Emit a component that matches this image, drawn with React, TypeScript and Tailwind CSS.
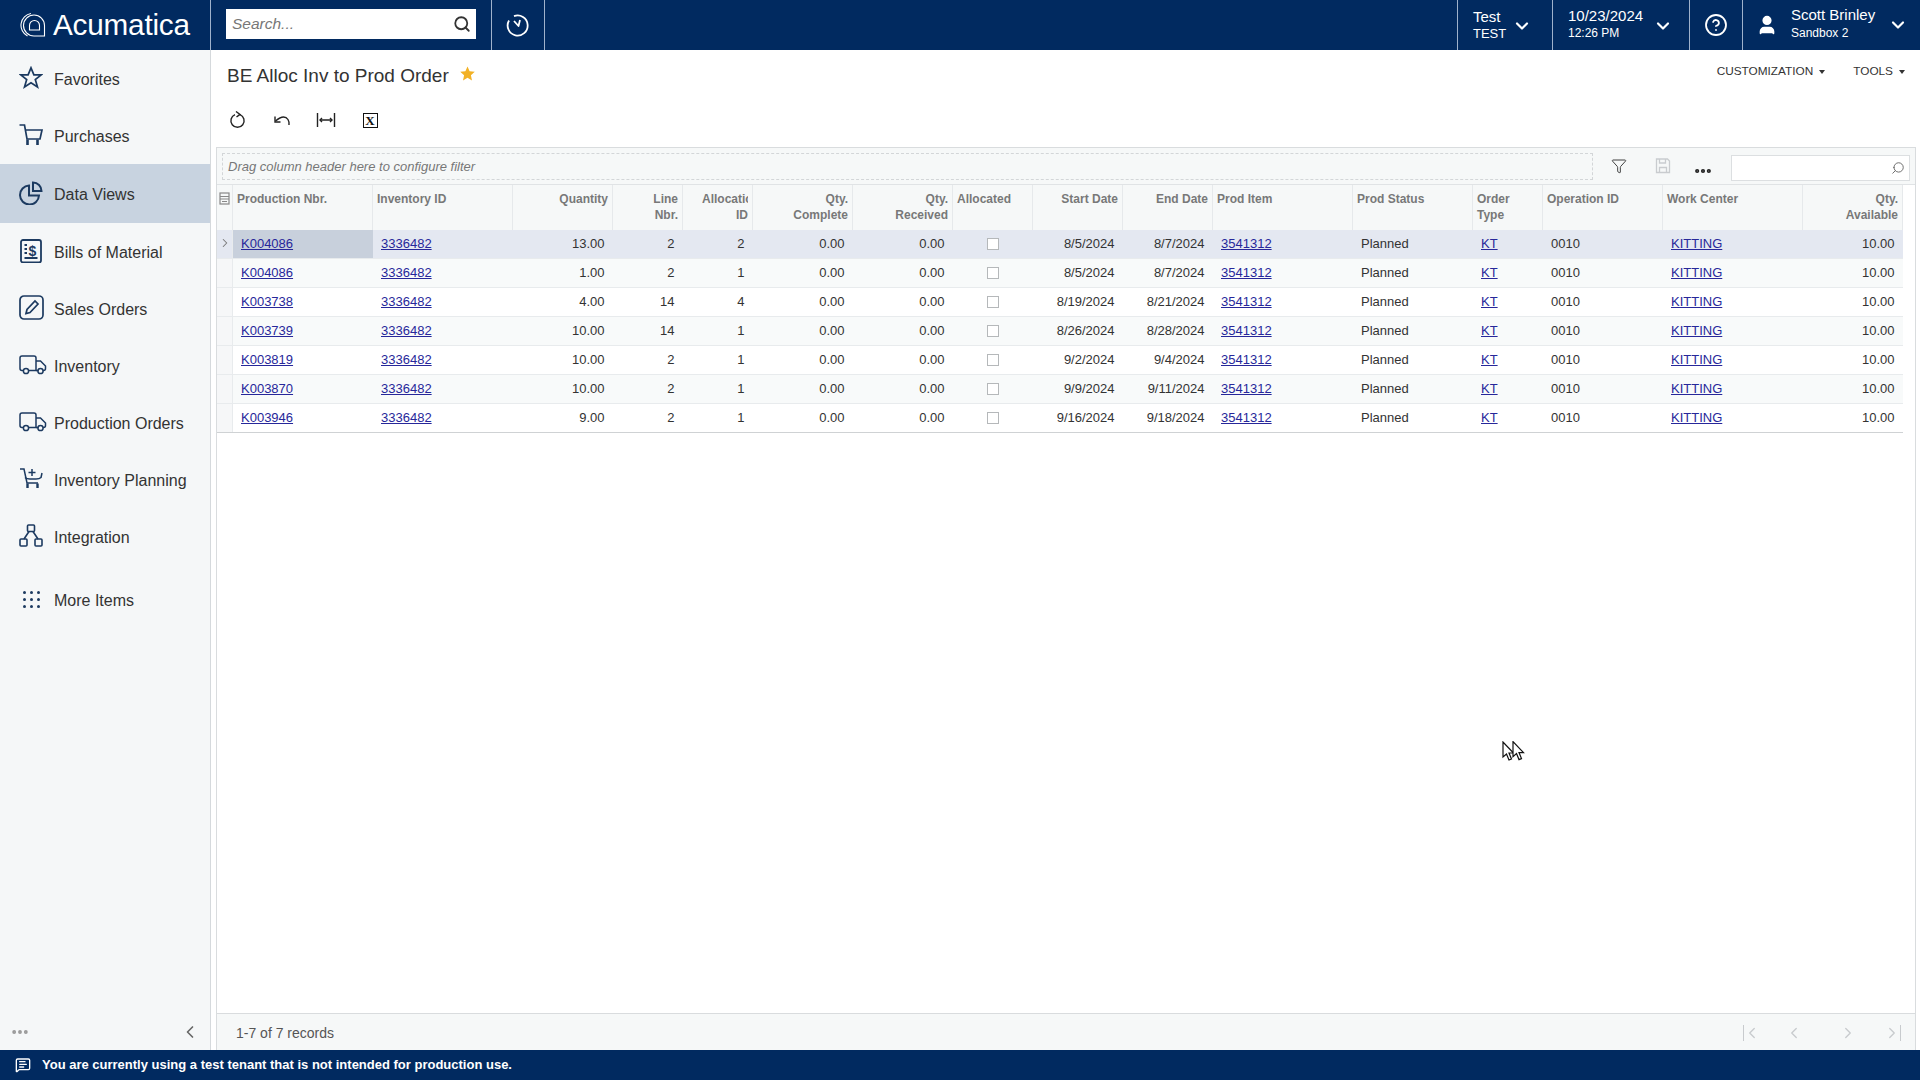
import { ChevronDown, ChevronLeft, ChevronRight, Search, Ellipsis, Funnel, CircleQuestionMark, User, MessageSquareText } from "lucide-react"

const ink = "#1c3a60"
const gridCols =
  "grid grid-cols-[16px_140px_140px_100px_70px_70px_100px_100px_80px_90px_90px_140px_120px_70px_120px_140px_100px]"

const rows = [
  ["K004086", "13.00", "2", "2", "8/5/2024", "8/7/2024", "10.00"],
  ["K004086", "1.00", "2", "1", "8/5/2024", "8/7/2024", "10.00"],
  ["K003738", "4.00", "14", "4", "8/19/2024", "8/21/2024", "10.00"],
  ["K003739", "10.00", "14", "1", "8/26/2024", "8/28/2024", "10.00"],
  ["K003819", "10.00", "2", "1", "9/2/2024", "9/4/2024", "10.00"],
  ["K003870", "10.00", "2", "1", "9/9/2024", "9/11/2024", "10.00"],
  ["K003946", "9.00", "2", "1", "9/16/2024", "9/18/2024", "10.00"],
]

function Truck() {
  return (
    <svg width="28" height="20" viewBox="0 0 28 20" fill="none" stroke={ink} strokeWidth="1.5">
      <path d="M5 15.5H3a2 2 0 0 1-2-2V3a2 2 0 0 1 2-2h12a2 2 0 0 1 2 2v12.5H9.5" />
      <path d="M17 6h4.5l5 5v2.5a2 2 0 0 1-2 2H24M19.5 15.5H17" />
      <circle cx="7" cy="16" r="2.6" />
      <circle cx="21.5" cy="16" r="2.6" />
    </svg>
  )
}

function CartPlus() {
  return (
    <svg width="24" height="22" viewBox="0 0 24 22" fill="none" stroke={ink} strokeWidth="1.5">
      <path d="M1 1h4l3 14h11" />
      <path d="M6 9.5c1 1 3 1.5 5 1.5h6c2 0 4-.5 5-1.5L23 5" />
      <path d="M13 1v7M9.5 4.5h7" />
      <path d="M8.5 15.5V20M18.5 15.5V20" strokeWidth="2.4" />
    </svg>
  )
}

const navItems = [
  {
    label: "Favorites",
    icon: (
      <svg width="24" height="23" viewBox="0 0 24 23" fill="none" stroke={ink} strokeWidth="1.7" strokeLinejoin="miter">
        <path d="M12 1.800l2.900 7h7.300l-5.900 4.700 2.200 7.500-6.500-4.300-6.500 4.300 2.200-7.500-5.900-4.700h7.300z" />
      </svg>
    ),
  },
  {
    label: "Purchases",
    icon: (
      <svg width="24" height="22" viewBox="0 0 24 22" fill="none" stroke={ink} strokeWidth="1.700">
        <path d="M0.500 1H5.500L8 15H21L23 6H6" />
        <path d="M8.500 15.500V21M18.500 15.500V21" strokeWidth="2.600" />
      </svg>
    ),
  },
  {
    label: "Data Views",
    active: true,
    icon: (
      <svg width="24" height="24" viewBox="0 0 24 24" fill="none" stroke={ink} strokeWidth="2">
        <path d="M10 4.500A9.500 9.500 0 1 0 20 14.500H10Z" />
        <path d="M14 1.500A8.500 8.500 0 0 1 22.500 10H14Z" />
      </svg>
    ),
  },
  {
    label: "Bills of Material",
    icon: (
      <svg width="24" height="24" viewBox="0 0 24 24" fill="none" stroke={ink} strokeWidth="1.8">
        <rect x="2" y="1" width="20" height="22.500" rx="2" />
        <path d="M5.500 6h2.500M5.500 10h2.500M5.500 14h2.500M5.500 19h13" />
        <text x="9.500" y="16.500" fontSize="14" fontWeight="700" fill={ink} stroke="none" fontFamily="Liberation Sans">
          $
        </text>
      </svg>
    ),
  },
  {
    label: "Sales Orders",
    icon: (
      <svg width="25" height="25" viewBox="0 0 25 25" fill="none" stroke={ink} strokeWidth="1.700">
        <rect x="1" y="1" width="23" height="23" rx="4" />
        <path d="M7 18.500l1-4 8-8.500 3 3-8 8.500z" />
      </svg>
    ),
  },
  { label: "Inventory", icon: <Truck /> },
  { label: "Production Orders", icon: <Truck /> },
  { label: "Inventory Planning", icon: <CartPlus /> },
  {
    label: "Integration",
    icon: (
      <svg width="24" height="23" viewBox="0 0 24 23" fill="none" stroke={ink} strokeWidth="1.6">
        <rect x="8.500" y="1" width="7" height="6.500" rx="1" />
        <rect x="1" y="15" width="7" height="7" rx="1" />
        <rect x="16" y="15" width="7" height="7" rx="1" />
        <path d="M10 7.500l-5 7.500M14 7.500l5 7.500" />
      </svg>
    ),
  },
]

function Header({ children, right }: { children: React.ReactNode; right?: boolean }) {
  return (
    <div
      className={`px-1 pt-[6px] border-r border-[#e6e9eb] leading-4 whitespace-nowrap overflow-hidden ${right ? "text-right" : ""}`}
    >
      {children}
    </div>
  )
}

function Cell({ children, right }: { children: React.ReactNode; right?: boolean }) {
  return <div className={`flex items-center ${right ? "justify-end pr-[8.5px]" : "px-2"}`}>{children}</div>
}

function Lnk({ children }: { children: React.ReactNode }) {
  return <span className="text-[#27279a] underline">{children}</span>
}

export default function App() {
  return (
    <div className="h-screen w-[1920px] flex flex-col bg-white overflow-hidden relative font-['Liberation_Sans',Arial,sans-serif] text-[#333]">
      {/* top bar */}
      <div className="h-[50px] shrink-0 bg-[#012a60] text-white flex">
        <div className="w-[211px] border-r border-[#9fb2cc] flex items-center pl-5 gap-[7px]">
          <svg width="26" height="26" viewBox="0 0 26 26" fill="none" stroke="white" strokeWidth="1.100">
            <path d="M24.500 24H14A10.500 10.500 0 1 1 24.500 13.500Z" />
            <path d="M7.500 24A12 12 0 0 1 11 1.500" />
            <path d="M9.500 18V13.500A5 5 0 0 1 19.500 13.500V18Z" />
          </svg>
          <span className="text-[29.700px] leading-none tracking-[-0.2px]">Acumatica</span>
        </div>
        <div className="w-[281px] border-r border-[#9fb2cc] pl-[15px] pt-[9px]">
          <div className="w-[250px] h-[30px] bg-white flex items-center justify-between pl-[6px] pr-[5px]">
            <span className="italic text-[15.5px] text-[#777]">Search...</span>
            <Search size={18} color="#333" strokeWidth={2.4} />
          </div>
        </div>
        <div className="w-[53px] border-r border-[#9fb2cc] flex items-center justify-center">
          <svg width="24" height="24" viewBox="0 0 24 24" fill="none" stroke="white" strokeWidth="1.8">
            <path d="M8 3.200a10 10 0 1 1-5 4.300" />
            <path d="M8 8l4.500 5 1.500-6" strokeLinejoin="round" />
          </svg>
        </div>
        <div className="flex-1" />
        <div className="w-[95px] border-l border-[#9fb2cc] relative pl-[15px] pt-[8px]">
          <div className="text-[15px] leading-[18px]">Test</div>
          <div className="text-[13px] leading-[15px]">TEST</div>
          <ChevronDown size={20} strokeWidth={2.6} className="absolute left-[54px] top-[16px]" />
        </div>
        <div className="w-[137px] border-l border-[#9fb2cc] relative pl-[15px] pt-[7px]">
          <div className="text-[15px] leading-[18px]">10/23/2024</div>
          <div className="text-xs leading-[17px]">12:26 PM</div>
          <ChevronDown size={20} strokeWidth={2.6} className="absolute left-[100px] top-[16px]" />
        </div>
        <div className="w-[53px] border-l border-[#9fb2cc] flex items-center justify-center">
          <CircleQuestionMark size={24} strokeWidth={1.8} />
        </div>
        <div className="w-[178px] border-l border-[#9fb2cc] relative pl-[48px] pt-[6px]">
          <User size={22} fill="white" strokeWidth={2} className="absolute left-[13px] top-[14px]" />
          <div className="text-[15px] leading-[18px]">Scott Brinley</div>
          <div className="text-xs leading-[18px]">Sandbox 2</div>
          <ChevronDown size={20} strokeWidth={2.6} className="absolute left-[145px] top-[15px]" />
        </div>
      </div>

      <div className="flex-1 flex min-h-0">
        {/* sidebar */}
        <div className="w-[211px] shrink-0 bg-[#f5f7f8] border-r border-[#d5d9dc] flex flex-col">
          {navItems.map((item) => (
            <div
              key={item.label}
              className={`flex items-center pl-[19px] pt-[2px] ${item.active ? "h-[59px] bg-[#c8d3e0]" : "h-[57px]"}`}
            >
              <span className="w-[35px] flex items-center -mt-[4px]">{item.icon}</span>
              <span className="text-base">{item.label}</span>
            </div>
          ))}
          <div className="flex items-center pl-[23px] h-[57px] mt-[7px]">
            <span className="grid grid-cols-[3px_3px_3px] gap-[4px] mr-[14px] -mt-[3px]">
              {Array.from({ length: 9 }).map((_, i) => (
                <span key={i} className="w-[3px] h-[3px] rounded-full bg-[#1c3a60]" />
              ))}
            </span>
            <span className="text-base">More Items</span>
          </div>
          <div className="flex-1" />
          <div className="h-[37px] flex items-center justify-between pl-[10px] pr-[10px]">
            <Ellipsis size={20} color="#999" strokeWidth={2.6} />
            <ChevronLeft size={20} color="#666" strokeWidth={2} />
          </div>
        </div>

        {/* content */}
        <div className="flex-1 min-w-0 flex flex-col">
          <div className="h-[97px] shrink-0 pl-[16px] pr-[14px] relative">
            <div className="flex items-center pt-[14px] gap-[11px]">
              <span className="text-[19px] leading-[24px] text-[#333]">BE Alloc Inv to Prod Order</span>
              <Star />
            </div>
            <div className="absolute right-[15px] top-[13px] flex items-center text-[11.8px] text-[#333]">
              <span>CUSTOMIZATION</span>
              <span className="ml-[6px] mr-[28px] border-x-[3.5px] border-t-4 border-x-transparent border-t-[#333]" />
              <span>TOOLS</span>
              <span className="ml-[6px] border-x-[3.5px] border-t-4 border-x-transparent border-t-[#333]" />
            </div>
            <div className="flex items-center mt-[23px] -ml-[11px]">
              <span className="w-[44px] flex justify-center">
                <svg width="18" height="18" viewBox="0 0 18 18" fill="none" stroke="#222" strokeWidth="1.4">
                  <path d="M6 3.600a6.600 6.600 0 1 0 5 0" />
                  <path d="M7 0.500l4 2.900-3.500 2.600" />
                </svg>
              </span>
              <span className="w-[44px] flex justify-center">
                <svg width="18" height="18" viewBox="0 0 18 18" fill="none" stroke="#222" strokeWidth="1.4">
                  <path d="M16 14c.6-4-1.500-8-5.500-8-2.500 0-5 1.500-8 4" />
                  <path d="M2 5.500V11h5.500" />
                </svg>
              </span>
              <span className="w-[44px] flex justify-center">
                <svg width="20" height="18" viewBox="0 0 20 18" fill="none" stroke="#222" strokeWidth="1.4">
                  <path d="M1.500 2v14M18.500 2v14M4 9h12" />
                  <path d="M6 7l-2 2 2 2M14 7l2 2-2 2" />
                </svg>
              </span>
              <span className="w-[44px] flex justify-center">
                <span className="w-[15px] h-[15px] border-[1.5px] border-[#111] flex items-center justify-center text-[13px] leading-none font-bold font-['Liberation_Serif',serif] text-[#111]">
                  X
                </span>
              </span>
            </div>
          </div>

          {/* grid panel */}
          <div className="flex-1 min-h-0 ml-[5px] mr-[4px] flex flex-col border-x border-t border-[#d9dcde]">
            <div className="h-[37px] shrink-0 bg-[#f6f8f8] border-b border-[#e0e3e5] flex pl-[5px]">
              <div className="w-[1371px] h-[27px] mt-[5px] border border-dashed border-[#d3d6d8] flex items-center pl-[5px] italic text-[13px] text-[#777]">
                Drag column header here to configure filter
              </div>
              <div className="w-[25px] flex items-center justify-center ml-[13px]">
                <Funnel size={16} color="#333" strokeWidth={1.4} />
              </div>
              <div className="w-[18px] flex items-center justify-center ml-[23px]">
                <svg width="16" height="16" viewBox="0 0 16 16" fill="none" stroke="#c9cccf" strokeWidth="1.3">
                  <path d="M1.500 1h11l2 2v11.500h-13z" />
                  <path d="M4.500 1v4h6V1M4.500 15V9.500h7V15" />
                </svg>
              </div>
              <div className="w-[40px] flex items-center justify-center ml-[11px]">
                <Ellipsis size={20} color="#222" strokeWidth={3} className="mt-[10px]" />
              </div>
              <div className="w-[179px] h-[26px] mt-[7px] ml-[8px] bg-white border border-[#dcdfe1] flex items-center justify-end pr-1">
                <Search size={14} color="#666" strokeWidth={1.6} className="-scale-x-100" />
              </div>
            </div>

            <div className="flex-1 min-h-0 bg-white overflow-hidden">
              <div className={`${gridCols} h-[45px] bg-[#f6f8f8] font-bold text-xs text-[#787878] w-[1686px]`}>
                <div className="border-r border-[#e6e9eb] flex justify-center pt-[7px]">
                  <svg width="11" height="13" viewBox="0 0 11 13" fill="none" stroke="#888" strokeWidth="1.200">
                    <rect x="1" y="1" width="9" height="11" />
                    <path d="M1 4.500h9M1 7h9M3 9.500h5" />
                  </svg>
                </div>
                <Header>Production Nbr.</Header>
                <Header>Inventory ID</Header>
                <Header right>Quantity</Header>
                <Header right>
                  Line
                  <br />
                  Nbr.
                </Header>
                <Header right>
                  <div className="ml-auto w-[46px] overflow-hidden text-left">Allocation</div>
                  ID
                </Header>
                <Header right>
                  Qty.
                  <br />
                  Complete
                </Header>
                <Header right>
                  Qty.
                  <br />
                  Received
                </Header>
                <Header>Allocated</Header>
                <Header right>Start Date</Header>
                <Header right>End Date</Header>
                <Header>Prod Item</Header>
                <Header>Prod Status</Header>
                <Header>
                  Order
                  <br />
                  Type
                </Header>
                <Header>Operation ID</Header>
                <Header>Work Center</Header>
                <Header right>
                  Qty.
                  <br />
                  Available
                </Header>
              </div>

              {rows.map((r, i) => (
                <div
                  key={i}
                  className={`${gridCols} h-[29px] w-[1686px] text-[13px] border-b ${
                    i === 6 ? "border-[#cfd2d4]" : "border-[#e8ebed]"
                  } ${i === 0 ? "bg-[#e4e8f1]" : i % 2 === 1 ? "bg-[#f8fafa]" : "bg-white"}`}
                >
                  <div
                    className={`border-r border-[#e8ebed] flex items-center justify-center ${i === 0 ? "" : "bg-[#f6f7f8]"}`}
                  >
                    {i === 0 && <ChevronRight size={14} color="#777" strokeWidth={1.8} className="-mt-[2px]" />}
                  </div>
                  <div className={`px-2 flex items-center ${i === 0 ? "bg-[#c8d0dc]" : ""}`}>
                    <Lnk>{r[0]}</Lnk>
                  </div>
                  <Cell>
                    <Lnk>3336482</Lnk>
                  </Cell>
                  <Cell right>{r[1]}</Cell>
                  <Cell right>{r[2]}</Cell>
                  <Cell right>{r[3]}</Cell>
                  <Cell right>0.00</Cell>
                  <Cell right>0.00</Cell>
                  <div className="flex items-center justify-center">
                    <span className="w-3 h-3 bg-white border border-[#b5b8ba]" />
                  </div>
                  <Cell right>{r[4]}</Cell>
                  <Cell right>{r[5]}</Cell>
                  <Cell>
                    <Lnk>3541312</Lnk>
                  </Cell>
                  <Cell>Planned</Cell>
                  <Cell>
                    <Lnk>KT</Lnk>
                  </Cell>
                  <Cell>0010</Cell>
                  <Cell>
                    <Lnk>KITTING</Lnk>
                  </Cell>
                  <Cell right>{r[6]}</Cell>
                </div>
              ))}
            </div>

            <div className="h-[37px] shrink-0 bg-[#f6f8f8] border-t border-[#d9dcde] flex items-center justify-between pl-[19px] pr-px pt-[1px] text-sm text-[#555]">
              <span>1-7 of 7 records</span>
              <div className="flex items-center text-[#c8cbce]">
                <span className="w-[44px] flex items-center justify-center pl-[3px]">
                  <span className="w-px h-4 bg-[#c8cbce] -mr-[1px]" />
                  <ChevronLeft size={18} strokeWidth={1.8} />
                </span>
                <span className="w-[44px] flex justify-center">
                  <ChevronLeft size={18} strokeWidth={1.8} />
                </span>
                <span className="w-[10px]" />
                <span className="w-[44px] flex justify-center">
                  <ChevronRight size={18} strokeWidth={1.8} />
                </span>
                <span className="w-[44px] flex items-center justify-center">
                  <ChevronRight size={18} strokeWidth={1.8} />
                  <span className="w-px h-4 bg-[#c8cbce] -ml-[1px]" />
                </span>
              </div>
            </div>
          </div>
        </div>
      </div>

      {/* tenant notice */}
      <div className="h-[30px] shrink-0 bg-[#012a60] flex items-center pl-[15px] text-[13px] font-bold text-white">
        <MessageSquareText size={16} strokeWidth={2} className="mr-[11px]" />
        <span>You are currently using a test tenant that is not intended for production use.</span>
      </div>

      {/* mouse cursors from the screen recording */}
      <svg className="absolute left-[1502px] top-[741px]" width="24" height="22" viewBox="0 0 24 22" fill="white" stroke="#111" strokeWidth="1.200">
        <path d="M1 1v15l3.500-3 2.500 6 2.500-1-2.500-6h4.500z" />
        <path d="M11 0.600v15l3.500-3 2.500 6 2.500-1-2.500-6h4.500z" />
      </svg>
    </div>
  )
}

function Star() {
  return (
    <svg width="15" height="15" viewBox="0 0 15 15" fill="#f2b125" className="-mt-[5px]">
      <path d="M7.500 0.500l2.100 4.800 5.200.5-3.900 3.500 1.100 5.100-4.500-2.700-4.500 2.700 1.100-5.100L.2 5.800l5.200-.5z" />
    </svg>
  )
}
